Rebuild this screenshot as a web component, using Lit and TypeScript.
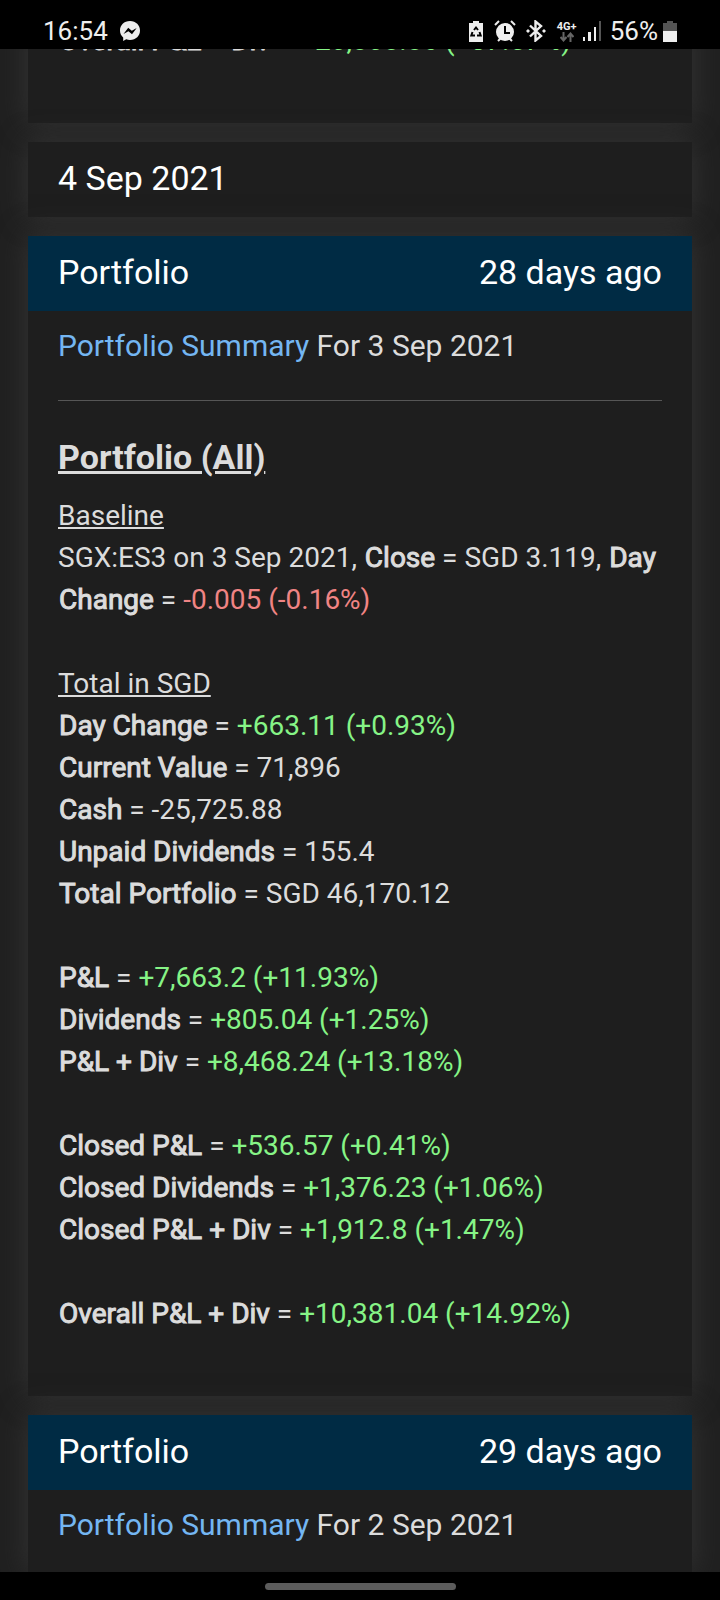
import { LitElement, html, css, nothing } from "lit";
import { customElement, property } from "lit/decorators.js";

type Tone = "up" | "down" | "";
interface Figure { label: string; value: string; tone: Tone }

const fig = (label: string, value: string, tone: Tone = ""): Figure => ({ label, value, tone });

const totals: Figure[] = [
  fig("Day Change", "+663.11 (+0.93%)", "up"),
  fig("Current Value", "71,896"),
  fig("Cash", "-25,725.88"),
  fig("Unpaid Dividends", "155.4"),
  fig("Total Portfolio", "SGD 46,170.12"),
];
const groups: Figure[][] = [
  [
    fig("P&L", "+7,663.2 (+11.93%)", "up"),
    fig("Dividends", "+805.04 (+1.25%)", "up"),
    fig("P&L + Div", "+8,468.24 (+13.18%)", "up"),
  ],
  [
    fig("Closed P&L", "+536.57 (+0.41%)", "up"),
    fig("Closed Dividends", "+1,376.23 (+1.06%)", "up"),
    fig("Closed P&L + Div", "+1,912.8 (+1.47%)", "up"),
  ],
  [fig("Overall P&L + Div", "+10,381.04 (+14.92%)", "up")],
];

const figure = (f: Figure) => html`<b>${f.label}</b> = <span class=${f.tone}>${f.value}</span>`;

@customElement("status-bar")
class StatusBar extends LitElement {
  static styles = css`
    :host {
      display: flex;
      align-items: center;
      height: 49px;
      padding: 13px 43px 0;
      box-sizing: border-box;
      background: #000;
      color: #eee;
      font-size: 26px;
      line-height: 32px;
      position: relative;
      z-index: 1;
    }
    .messenger { margin-left: 11px; }
    .tray { margin-left: auto; display: flex; align-items: center; }
    .net { display: flex; flex-direction: column; align-items: center; width: 20px; margin-left: 11px; }
    .net-label { font-size: 11px; line-height: 11px; font-weight: 700; }
    .alarm { margin-left: 11px; }
    .bt { margin-left: 10px; }
    .signal { margin-left: 6px; }
    .level { margin: 0 5px 0 8px; }
    svg { display: block; }
  `;
  render() {
    return html`
      <span>16:54</span>
      <svg class="messenger" width="22" height="22" viewBox="0 0 22 22">
        <path fill="#eee" d="M11 1C5 1 1 5.200 1 10.500c0 3 1.200 5.300 3.200 7V21l3-1.700c1.200.4 2.400.6 3.800.6 6 0 10-4.200 10-9.400S17 1 11 1z"/>
        <path fill="#000" d="M4.500 14l4.700-6.200 3.600 2.900 4.900-2.700-4.700 6.200-3.600-2.900z"/>
      </svg>
      <div class="tray">
        <svg width="14" height="21" viewBox="0 0 14 21">
          <path fill="#eee" d="M4 0h6v2h4v19H0V2h4z"/>
          <path fill="none" stroke="#000" stroke-width="2" d="M5 9l2-2.500L9 9M10.500 11l1.200 3.500H8M6 14.500H2.300L3.500 11"/>
        </svg>
        <svg class="alarm" width="22" height="22" viewBox="0 0 22 22">
          <circle cx="11" cy="12" r="9" fill="#eee"/>
          <path fill="none" stroke="#eee" stroke-width="2" d="M1 5l4-4M21 5l-4-4M4 21l3-3M18 21l-3-3"/>
          <path fill="none" stroke="#000" stroke-width="2" d="M11 6v7h5"/>
        </svg>
        <svg class="bt" width="20" height="22" viewBox="0 0 20 22">
          <path fill="none" stroke="#eee" stroke-width="2.400" d="M4 5.500l11 10.500-5.500 4.500V1.500L15 6 4 16.500"/>
          <path fill="#eee" d="M0 11l2-2 2 2-2 2zM16 11l2-2 2 2-2 2z"/>
        </svg>
        <div class="net">
          <span class="net-label">4G+</span>
          <svg width="14" height="10" viewBox="0 0 14 10">
            <path fill="none" stroke="#666" stroke-width="2" d="M3.500 0v8M.5 5l3 3.500 3-3.500M10.500 10V2M7.500 5l3-3.500 3 3.500"/>
          </svg>
        </div>
        <svg class="signal" width="19" height="20" viewBox="0 0 19 20">
          <path fill="#eee" d="M0 16h2v4H0zM5 11h3v9H5zM11 6h2v14h-2z"/>
          <path fill="#555" d="M16 0h2v20h-2z"/>
        </svg>
        <span class="level">56%</span>
        <svg width="14" height="21" viewBox="0 0 14 21">
          <path fill="#555" d="M4 0h6v2h4v9H0V2h4z"/><path fill="#eee" d="M0 10h14v11H0z"/>
        </svg>
      </div>`;
  }
}

@customElement("portfolio-card")
class PortfolioCard extends LitElement {
  @property() age = "";
  @property() date = "";
  static styles = css`
    :host { display: block; background: #1e1e1e; box-shadow: 0 0 28px #353535; }
    .head {
      display: flex;
      justify-content: space-between;
      padding: 12px 30px 14px;
      background: #002b44;
      color: #fff;
      font-size: 34px;
      line-height: 49px;
    }
    .title { margin: 0; font-size: 34px; font-weight: 400; }
    .body { padding: 12px 30px 0; }
    .summary { margin: 0; font-size: 30px; line-height: 45px; }
    .link { color: #74b6f2; text-decoration: none; }
  `;
  render() {
    return html`
      <header class="head"><h2 class="title">Portfolio</h2><span>${this.age}</span></header>
      <div class="body">
        <p class="summary"><a class="link" href="#summary">Portfolio Summary</a> For ${this.date}</p>
        <slot></slot>
      </div>`;
  }
}

@customElement("app-root")
class AppRoot extends LitElement {
  static styles = css`
    :host {
      display: flex;
      flex-direction: column;
      height: 100vh;
      overflow: hidden;
      background: #202020;
      color: #dcdcdc;
      font-family: Roboto, sans-serif;
    }
    .feed {
      flex: 1;
      min-height: 0;
      display: flex;
      flex-direction: column;
      gap: 19px;
      padding: 0 28px;
      margin-top: -29px;
    }
    .feed > * { flex-shrink: 0; }
    .panel { background: #1e1e1e; box-shadow: 0 0 28px #353535; }
    .previous { padding: 0 30px 61px; }
    .date { margin: 0; padding: 12px 30px 14px; color: #fff; font-size: 34px; line-height: 49px; font-weight: 400; }
    .rule { margin: 32px 0; border: 0; border-top: 1px solid #565656; }
    .heading { margin: 0 0 14px; font-size: 34px; line-height: 48px; font-weight: 700; text-decoration: underline; }
    .details { display: flex; flex-direction: column; gap: 42px; padding-bottom: 61px; }
    .lines { margin: 0; font-size: 28px; line-height: 42px; }
    b { margin-left: 1px; font-weight: 400; -webkit-text-stroke: 1px currentColor; }
    .up { color: #86f486; }
    .down { color: #f08484; }
    .last { flex: 1 0 auto; }
    .nav { position: relative; z-index: 1; flex: none; display: flex; align-items: center; justify-content: center; height: 28px; background: #000; }
    .pill { width: 191px; height: 7px; border-radius: 4px; background: #5c5c5c; }
  `;
  private lines(title: string, items: Figure[]) {
    return html`<p class="lines">${title ? html`<u>${title}</u><br>` : nothing}${items.map(
      (f, i) => html`${i ? html`<br>` : nothing}${figure(f)}`)}</p>`;
  }
  render() {
    return html`
      <status-bar></status-bar>
      <main class="feed">
        <section class="panel previous">${this.lines("", [fig("Overall P&L + Div", "+20,808.86 (+37.57%)", "up")])}</section>
        <h1 class="panel date">4 Sep 2021</h1>
        <portfolio-card age="28 days ago" date="3 Sep 2021">
          <hr class="rule">
          <h3 class="heading">Portfolio (All)</h3>
          <div class="details">
            <p class="lines"><u>Baseline</u><br>SGX:ES3 on 3 Sep 2021, <b>Close</b> = SGD 3.119, <b>Day</b> ${figure(fig("Change", "-0.005 (-0.16%)", "down"))}</p>
            ${this.lines("Total in SGD", totals)}
            ${groups.map((g) => this.lines("", g))}
          </div>
        </portfolio-card>
        <portfolio-card class="last" age="29 days ago" date="2 Sep 2021"></portfolio-card>
      </main>
      <footer class="nav"><div class="pill"></div></footer>`;
  }
}
